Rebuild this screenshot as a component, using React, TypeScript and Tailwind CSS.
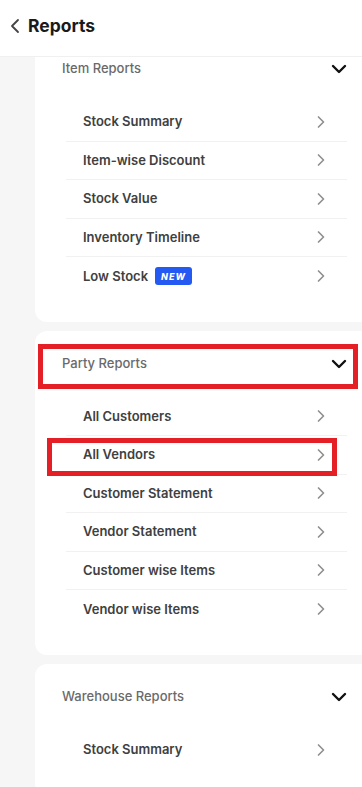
import { ChevronLeft, ChevronDown, ChevronRight } from "lucide-react";

type Report = { label: string; isNew?: boolean; marked?: boolean };

type Section = { title: string; marked?: boolean; first?: boolean; items: Report[] };

const sections: Section[] = [
  {
    title: "Item Reports",
    first: true,
    items: [
      { label: "Stock Summary" },
      { label: "Item-wise Discount" },
      { label: "Stock Value" },
      { label: "Inventory Timeline" },
      { label: "Low Stock", isNew: true },
    ],
  },
  {
    title: "Party Reports",
    marked: true,
    items: [
      { label: "All Customers" },
      { label: "All Vendors", marked: true },
      { label: "Customer Statement" },
      { label: "Vendor Statement" },
      { label: "Customer wise Items" },
      { label: "Vendor wise Items" },
    ],
  },
  {
    title: "Warehouse Reports",
    items: [{ label: "Stock Summary" }],
  },
];

function ReportRow({ item, last }: { item: Report; last: boolean }) {
  return (
    <div
      className={`relative flex h-[38.5px] items-center justify-between pl-[17px] pr-[16px] ${
        last ? "" : "border-b border-[#f1f1f1]"
      }`}
    >
      <div className="flex items-center gap-[7px]">
        <span className="text-[13px] font-semibold text-[#404040]">{item.label}</span>
        {item.isNew && (
          <span className="flex h-[18px] w-[37px] items-center justify-center rounded-[3px] bg-[#2459f2] text-[9px] font-extrabold italic tracking-[1px] text-white">
            NEW
          </span>
        )}
      </div>
      <ChevronRight size={20} strokeWidth={2} className="text-[#8f8f8f]" />
      {item.marked && (
        <div className="pointer-events-none absolute -left-[19px] right-[10px] top-[2px] -bottom-[2px] border-[5px] border-[#e41f26]" />
      )}
    </div>
  );
}

function ReportCard({ section }: { section: Section }) {
  return (
    <div
      className={`ml-[35px] rounded-l-xl bg-white pt-[11px] pb-[26px] ${
        section.first ? "-mt-[21px]" : "mt-[9px]"
      }`}
    >
      <div className="relative flex h-[44px] items-center justify-between pl-[27px] pr-[11px]">
        <span className="text-[13px] font-medium text-[#6a6a6a]">{section.title}</span>
        <ChevronDown size={24} strokeWidth={2.4} className="text-[#111]" />
        {section.marked && (
          <div className="pointer-events-none absolute left-[3px] right-[4px] top-[2px] -bottom-[3px] border-[5px] border-[#e41f26]" />
        )}
      </div>
      <div className="mt-[12px] ml-[31px] mr-[15px]">
        {section.items.map((item, i) => (
          <ReportRow key={item.label + i} item={item} last={i === section.items.length - 1} />
        ))}
      </div>
    </div>
  );
}

export default function App() {
  return (
    <div
      className="h-[787px] w-[362px] overflow-hidden bg-[#f6f6f6]"
      style={{ fontFamily: "Inter, 'Noto Sans', sans-serif" }}
    >
      <div className="relative z-10 flex h-[57px] items-center border-b border-[#f0f0f0] bg-white pb-[4px]">
        <ChevronLeft size={24} strokeWidth={1.8} className="ml-[3px] text-[#444]" />
        <span className="ml-[1px] text-[17.5px] font-bold text-[#1a1a1a]">Reports</span>
      </div>
      {sections.map((s) => (
        <ReportCard key={s.title} section={s} />
      ))}
    </div>
  );
}
